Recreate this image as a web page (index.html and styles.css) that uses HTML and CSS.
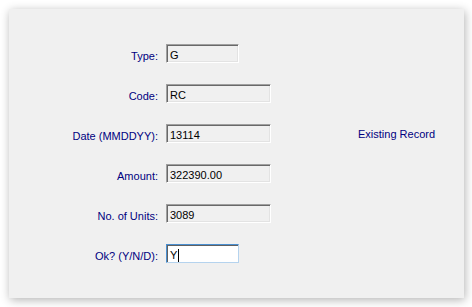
FILE: index.html
```html
<!DOCTYPE html>
<html lang="en">
<head>
  <meta charset="UTF-8">
  <title>Record Entry</title>
  <link rel="stylesheet" href="styles.css">
</head>
<body>

  <!-- Entry form panel -->
  <div class="panel">
    <div class="form">
      <label class="lbl">Type:</label>
      <div class="box short">G</div>
      <div></div>

      <label class="lbl">Code:</label>
      <div class="box">RC</div>
      <div></div>

      <label class="lbl">Date (MMDDYY):</label>
      <div class="box">13114</div>
      <div class="status">Existing Record</div>

      <label class="lbl">Amount:</label>
      <div class="box">322390.00</div>
      <div></div>

      <label class="lbl">No. of Units:</label>
      <div class="box">3089</div>
      <div></div>

      <label class="lbl">Ok? (Y/N/D):</label>
      <div class="box short focus">Y<span class="caret"></span></div>
      <div></div>
    </div>
  </div>

</body>
</html>
```

FILE: styles.css
```css
* {
  box-sizing: border-box;
}
body {
  margin: 0;
  background: #ffffff;
  font-family: 'Liberation Sans', Arial, sans-serif;
  font-size: 11px;
}
.panel {
  margin: 9px;
  width: 455px;
  height: 289px;
  background: #f0f0f0;
  box-shadow: 1px 2px 9px rgba(0, 0, 0, 0.3);
  padding-top: 35px;
}

/* Form grid */
.form {
  display: grid;
  grid-template-columns: 149px 183px auto;
  grid-auto-rows: 19px;
  column-gap: 8px;
  row-gap: 21px;
}
.lbl {
  align-self: end;
  text-align: right;
  color: #000080;
  line-height: 13px;
  white-space: nowrap;
}
.box {
  width: 105px;
  height: 19px;
  background: #f0f0f0;
  border: 1px solid;
  border-color: #a0a0a0 #ffffff #ffffff #a0a0a0;
  box-shadow: inset 1px 1px 0 #696969, inset -1px -1px 0 #e3e3e3;
  padding: 3px 3px 0;
  color: #000;
  line-height: 13px;
  display: flex;
  align-items: center;
}
.box.short {
  width: 73px;
}
.box.focus {
  background: #ffffff;
  border-color: #4a8fd0 #b5d3ee #b5d3ee #4a8fd0;
  box-shadow: inset 1px 1px 0 #606060;
}
.caret {
  display: inline-block;
  width: 1px;
  height: 13px;
  background: #000;
  margin-left: 1px;
}
.status {
  align-self: end;
  color: #000080;
  line-height: 13px;
  margin-bottom: 2px;
  margin-left: 1px;
  white-space: nowrap;
}
```
